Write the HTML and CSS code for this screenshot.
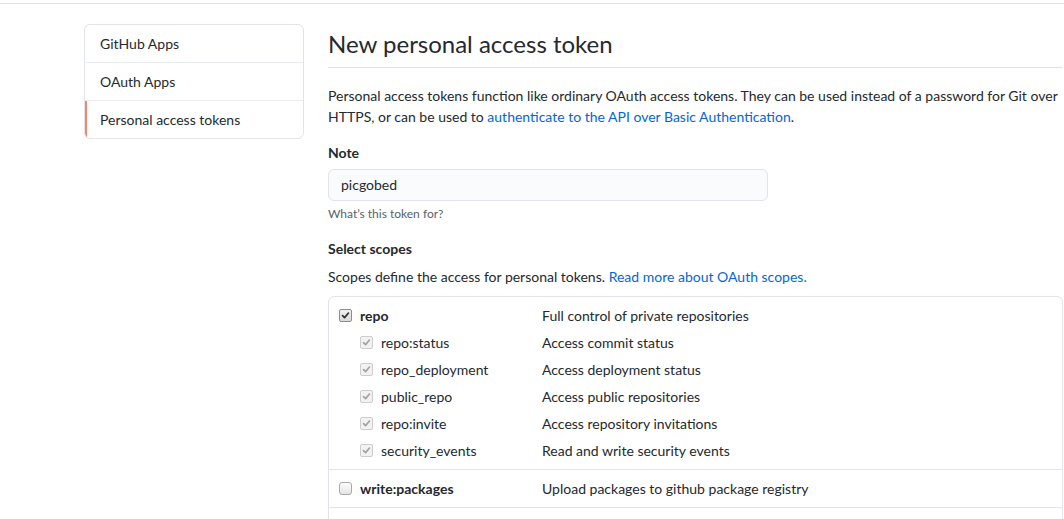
FILE: index.html
```html
<!DOCTYPE html>
<html lang="en">
<head>
<meta charset="utf-8">
<title>New personal access token</title>
<link rel="stylesheet" href="styles.css">
</head>
<body>
<div class="topbar"></div>
<div class="layout">
  <nav class="menu">
    <a class="menu-item" href="#">GitHub Apps</a>
    <a class="menu-item" href="#">OAuth Apps</a>
    <a class="menu-item selected" href="#">Personal access tokens</a>
  </nav>
  <main class="main">
    <div class="subhead"><h2 class="subhead-heading">New personal access token</h2></div>
    <p class="intro">Personal access tokens function like ordinary OAuth access tokens. They can be used instead of a password for Git over HTTPS, or can be used to <a href="#">authenticate to the API over Basic Authentication</a>.</p>
    <div class="form-group">
      <label class="form-label">Note</label>
      <div class="input">picgobed</div>
      <p class="note">What’s this token for?</p>
    </div>
    <div class="form-label scopes-label">Select scopes</div>
    <p class="scopes-desc">Scopes define the access for personal tokens. <a href="#">Read more about OAuth scopes.</a></p>
    <div class="scopes">
      <div class="scope-group">
        <div class="scope-row">
          <div class="scope-name top"><span class="cb checked"><svg viewBox="0 0 13 13"><path d="M3 6.6 L5.4 9 L10 3.6"/></svg></span><strong>repo</strong></div>
          <div class="scope-desc">Full control of private repositories</div>
        </div>
        <div class="scope-row">
          <div class="scope-name sub"><span class="cb disabled"><svg viewBox="0 0 13 13"><path d="M3 6.6 L5.4 9 L10 3.6"/></svg></span>repo:status</div>
          <div class="scope-desc">Access commit status</div>
        </div>
        <div class="scope-row">
          <div class="scope-name sub"><span class="cb disabled"><svg viewBox="0 0 13 13"><path d="M3 6.6 L5.4 9 L10 3.6"/></svg></span>repo_deployment</div>
          <div class="scope-desc">Access deployment status</div>
        </div>
        <div class="scope-row">
          <div class="scope-name sub"><span class="cb disabled"><svg viewBox="0 0 13 13"><path d="M3 6.6 L5.4 9 L10 3.6"/></svg></span>public_repo</div>
          <div class="scope-desc">Access public repositories</div>
        </div>
        <div class="scope-row">
          <div class="scope-name sub"><span class="cb disabled"><svg viewBox="0 0 13 13"><path d="M3 6.6 L5.4 9 L10 3.6"/></svg></span>repo:invite</div>
          <div class="scope-desc">Access repository invitations</div>
        </div>
        <div class="scope-row">
          <div class="scope-name sub"><span class="cb disabled"><svg viewBox="0 0 13 13"><path d="M3 6.6 L5.4 9 L10 3.6"/></svg></span>security_events</div>
          <div class="scope-desc">Read and write security events</div>
        </div>
      </div>
      <div class="scope-group">
        <div class="scope-row">
          <div class="scope-name top"><span class="cb"></span><strong>write:packages</strong></div>
          <div class="scope-desc">Upload packages to github package registry</div>
        </div>
      </div>
      <div class="scope-group empty"></div>
    </div>
  </main>
</div>
</body>
</html>
```
FILE: styles.css
```css
* { box-sizing: border-box; }
html, body { margin: 0; padding: 0; background: #fff; }
body {
  font-family: Lato, "Noto Sans", sans-serif;
  font-size: 14px;
  line-height: 21px;
  color: #24292e;
  overflow: hidden;
  height: 519px;
}
a { color: #0366d6; text-decoration: none; }
p { margin: 0; }

.topbar { height: 4px; border-bottom: 1px solid #e1e4e8; }

.layout {
  display: flex;
  gap: 24px;
  padding-left: 84px;
  margin-top: 20px;
  width: 1400px;
}

.menu {
  flex: 0 0 220px;
  align-self: flex-start;
  border: 1px solid #e1e4e8;
  border-radius: 6px;
  overflow: hidden;
}
.menu-item {
  display: block;
  padding: 8px 13px;
  color: #24292e;
  border-bottom: 1px solid #eaecef;
  border-left: 2px solid transparent;
}
.menu-item:last-child { border-bottom: 0; }
.menu-item.selected { border-left-color: #f9826c; }

.main { flex: 0 0 735px; }

.subhead {
  padding-top: 5px;
  padding-bottom: 8px;
  border-bottom: 1px solid #e1e4e8;
}
.subhead-heading {
  margin: 0;
  font-size: 24px;
  line-height: 30px;
  font-weight: 400;
}

.intro { margin-top: 17px; }

.form-group { margin-top: 15px; }
.form-label { display: block; font-weight: 700; }
.input {
  margin-top: 6px;
  width: 440px;
  height: 32px;
  padding: 5px 12px;
  line-height: 20px;
  background: #fafbfc;
  border: 1px solid #e1e4e8;
  border-radius: 6px;
}
.note {
  margin-top: 4px;
  font-size: 12px;
  line-height: 18px;
  color: #586069;
}

.scopes-label { margin-top: 15px; }
.scopes-desc { margin-top: 7px; }

.scopes {
  margin-top: 9px;
  border: 1px solid #e1e4e8;
  border-radius: 6px;
}
.scope-group {
  padding: 5px 0 5px;
  border-bottom: 1px solid #e1e4e8;
}
.scope-group.empty { height: 40px; border-bottom: 0; }
.scope-row { display: flex; height: 27px; align-items: center; }
.scope-name { display: flex; align-items: center; width: 213px; flex: 0 0 auto; }
.scope-name.top { padding-left: 10px; }
.scope-name.sub { padding-left: 31px; }
.scope-name strong { font-weight: 700; }
.scope-desc { color: #24292e; }

.cb {
  width: 13px;
  height: 13px;
  margin-right: 8px;
  border: 1px solid #a9a9a9;
  border-radius: 3px;
  background: linear-gradient(#fdfdfd, #e4e4e4);
  flex: 0 0 auto;
  display: flex;
}
.cb svg { width: 11px; height: 11px; }
.cb path { fill: none; stroke-width: 2; stroke-linecap: round; stroke-linejoin: round; }
.cb.checked { border-color: #8c8c8c; background: linear-gradient(#f2f2f2, #dadada); border-radius: 2px; }
.cb.checked path { stroke: #333; }
.cb.disabled { border-color: #cdcdcd; background: #f2f2f2; border-radius: 2px; }
.cb.disabled path { stroke: #a3a3a3; }
```
